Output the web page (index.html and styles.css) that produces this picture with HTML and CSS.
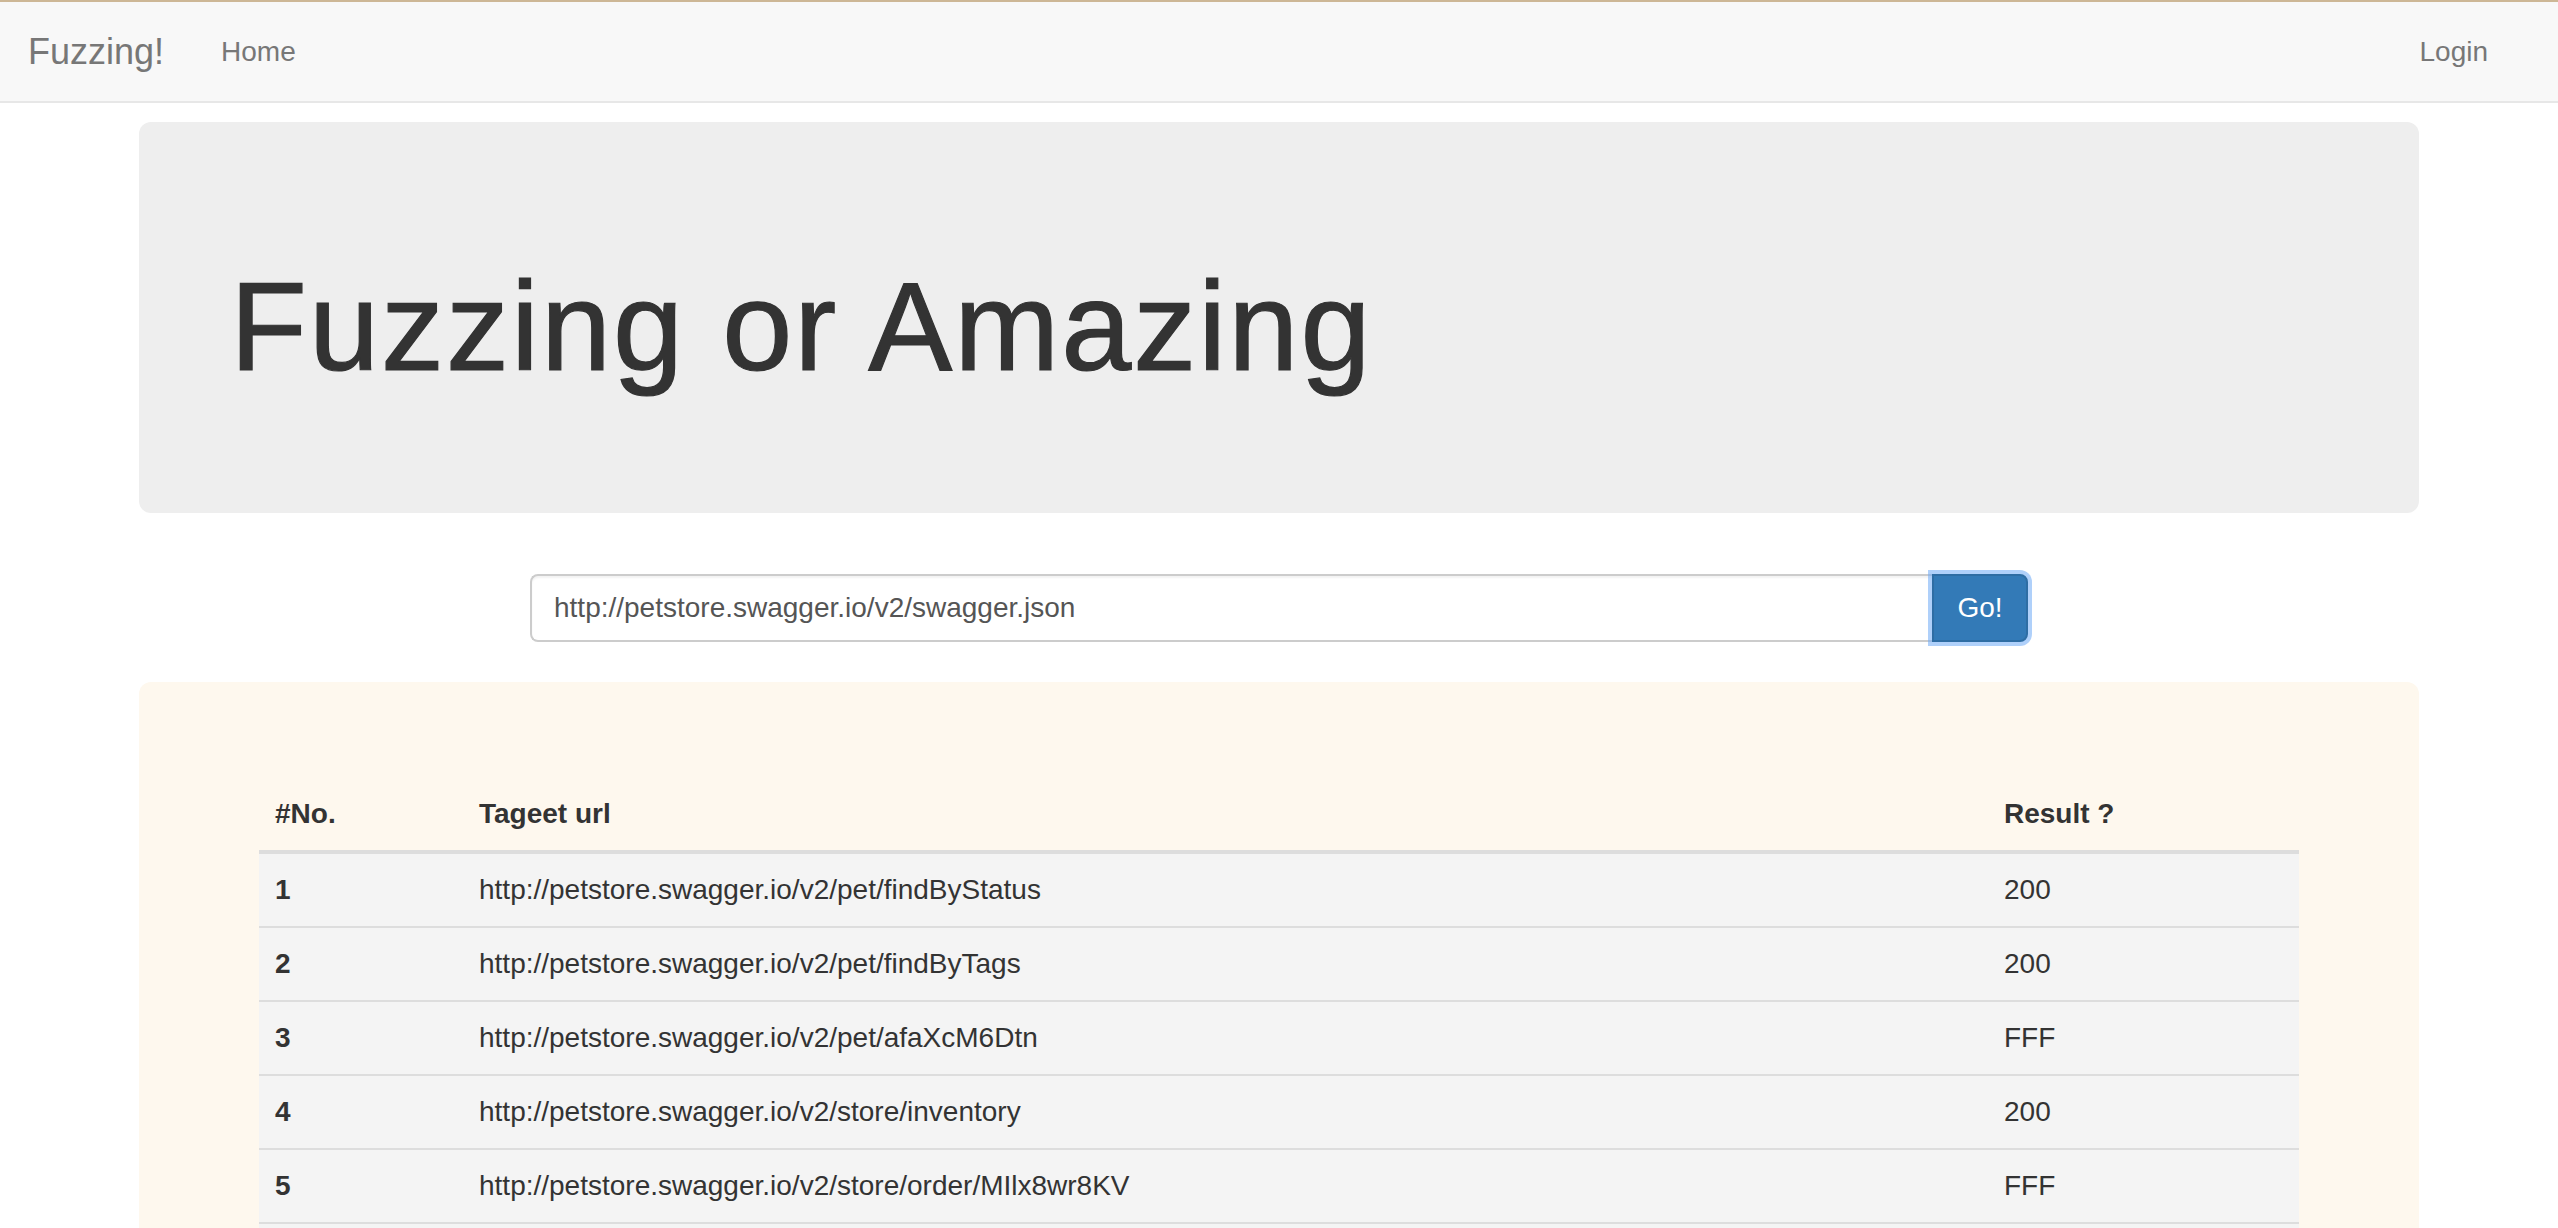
FILE: index.html
```html
<!DOCTYPE html>
<html lang="en">
<head>
<meta charset="utf-8">
<title>Fuzzing!</title>
<link rel="stylesheet" href="styles.css">
</head>
<body>
<nav class="navbar">
  <div class="nav-left">
    <a class="brand" href="#">Fuzzing!</a>
    <a class="nav-link" href="#">Home</a>
  </div>
  <div class="nav-right">
    <a class="nav-link" href="#">Login</a>
  </div>
</nav>

<main class="container">
  <section class="jumbotron">
    <h1 class="hero-title">Fuzzing or Amazing</h1>
  </section>

  <form class="input-group" onsubmit="return false;">
    <input class="url-input" type="text" value="http://petstore.swagger.io/v2/swagger.json">
    <button class="go-btn" type="submit">Go!</button>
  </form>

  <section class="results">
    <table class="results-table">
      <thead>
        <tr>
          <th class="col-no">#No.</th>
          <th class="col-url">Tageet url</th>
          <th class="col-res">Result ?</th>
        </tr>
      </thead>
      <tbody>
        <tr><th class="cell-no">1</th><td>http://petstore.swagger.io/v2/pet/findByStatus</td><td>200</td></tr>
        <tr><th class="cell-no">2</th><td>http://petstore.swagger.io/v2/pet/findByTags</td><td>200</td></tr>
        <tr><th class="cell-no">3</th><td>http://petstore.swagger.io/v2/pet/afaXcM6Dtn</td><td>FFF</td></tr>
        <tr><th class="cell-no">4</th><td>http://petstore.swagger.io/v2/store/inventory</td><td>200</td></tr>
        <tr><th class="cell-no">5</th><td>http://petstore.swagger.io/v2/store/order/MIlx8wr8KV</td><td>FFF</td></tr>
        <tr><th class="cell-no">&nbsp;</th><td>&nbsp;</td><td>&nbsp;</td></tr>
      </tbody>
    </table>
  </section>
</main>
</body>
</html>
```

FILE: styles.css
```css
* { box-sizing: border-box; }

html, body {
  margin: 0;
  padding: 0;
  background: #fff;
  font-family: "Liberation Sans", Arial, Helvetica, sans-serif;
  color: #333;
  font-size: 28px;
  line-height: 40px;
}

a { text-decoration: none; }

/* ---------- navbar ---------- */
.navbar {
  display: flex;
  justify-content: space-between;
  align-items: center;
  height: 103px;
  background: #f8f8f8;
  border-top: 2px solid #cdb796;
  border-bottom: 2px solid #e7e7e7;
  padding: 0 40px 0 28px;
}

.nav-left, .nav-right {
  display: flex;
  align-items: center;
}

.brand {
  font-size: 36px;
  color: #777;
  padding-right: 27px;
  line-height: 40px;
}

.nav-link {
  font-size: 28px;
  color: #777;
  padding: 0 30px;
  line-height: 40px;
}

/* ---------- container ---------- */
.container {
  width: 2280px;
  margin: 0 auto;
  padding-top: 19px;
}

/* ---------- jumbotron ---------- */
.jumbotron {
  background: #eeeeee;
  border-radius: 12px;
  padding: 96px 91px;
  margin-bottom: 61px;
}

.hero-title {
  margin: 40px 0 20px;
  font-size: 126px;
  line-height: 1.1;
  font-weight: 400;
  letter-spacing: 2px;
  color: #333;
  -webkit-text-stroke: 1.2px #333;
}

/* ---------- input group ---------- */
.input-group {
  display: flex;
  width: 1498px;
  height: 68px;
  margin: 0 auto;
}

.url-input {
  flex: 1;
  height: 68px;
  border: 2px solid #ccc;
  border-right: 0;
  border-radius: 8px 0 0 8px;
  padding: 0 22px;
  font-family: "Liberation Sans", Arial, Helvetica, sans-serif;
  font-size: 28px;
  color: #555;
  background: #fff;
  box-shadow: inset 0 2px 2px rgba(0,0,0,0.05);
  outline: none;
}

.go-btn {
  width: 96px;
  height: 68px;
  background: #337ab7;
  border: 2px solid #2e6da4;
  border-radius: 0 8px 8px 0;
  color: #fff;
  font-family: "Liberation Sans", Arial, Helvetica, sans-serif;
  font-size: 28px;
  padding: 0;
  box-shadow: 0 0 0 4px rgba(110, 170, 245, 0.55);
  position: relative;
  cursor: pointer;
}

/* ---------- results ---------- */
.results {
  margin-top: 40px;
  background: #fef8ee;
  border-radius: 12px;
  padding: 96px 120px 96px;
}

.results-table {
  width: 100%;
  border-collapse: collapse;
  border-spacing: 0;
}

.results-table th,
.results-table td {
  padding: 16px;
  text-align: left;
  line-height: 40px;
  font-size: 28px;
  vertical-align: top;
}

.results-table thead th {
  font-weight: bold;
  border-bottom: 4px solid #ddd;
  color: #333;
}

.results-table tbody tr {
  background: #f4f4f4;
}

.results-table tbody th,
.results-table tbody td {
  border-bottom: 2px solid #ddd;
}

.cell-no { font-weight: bold; }

.col-no { width: 204px; }
.col-url { width: auto; }
.col-res { width: 311px; }
```
